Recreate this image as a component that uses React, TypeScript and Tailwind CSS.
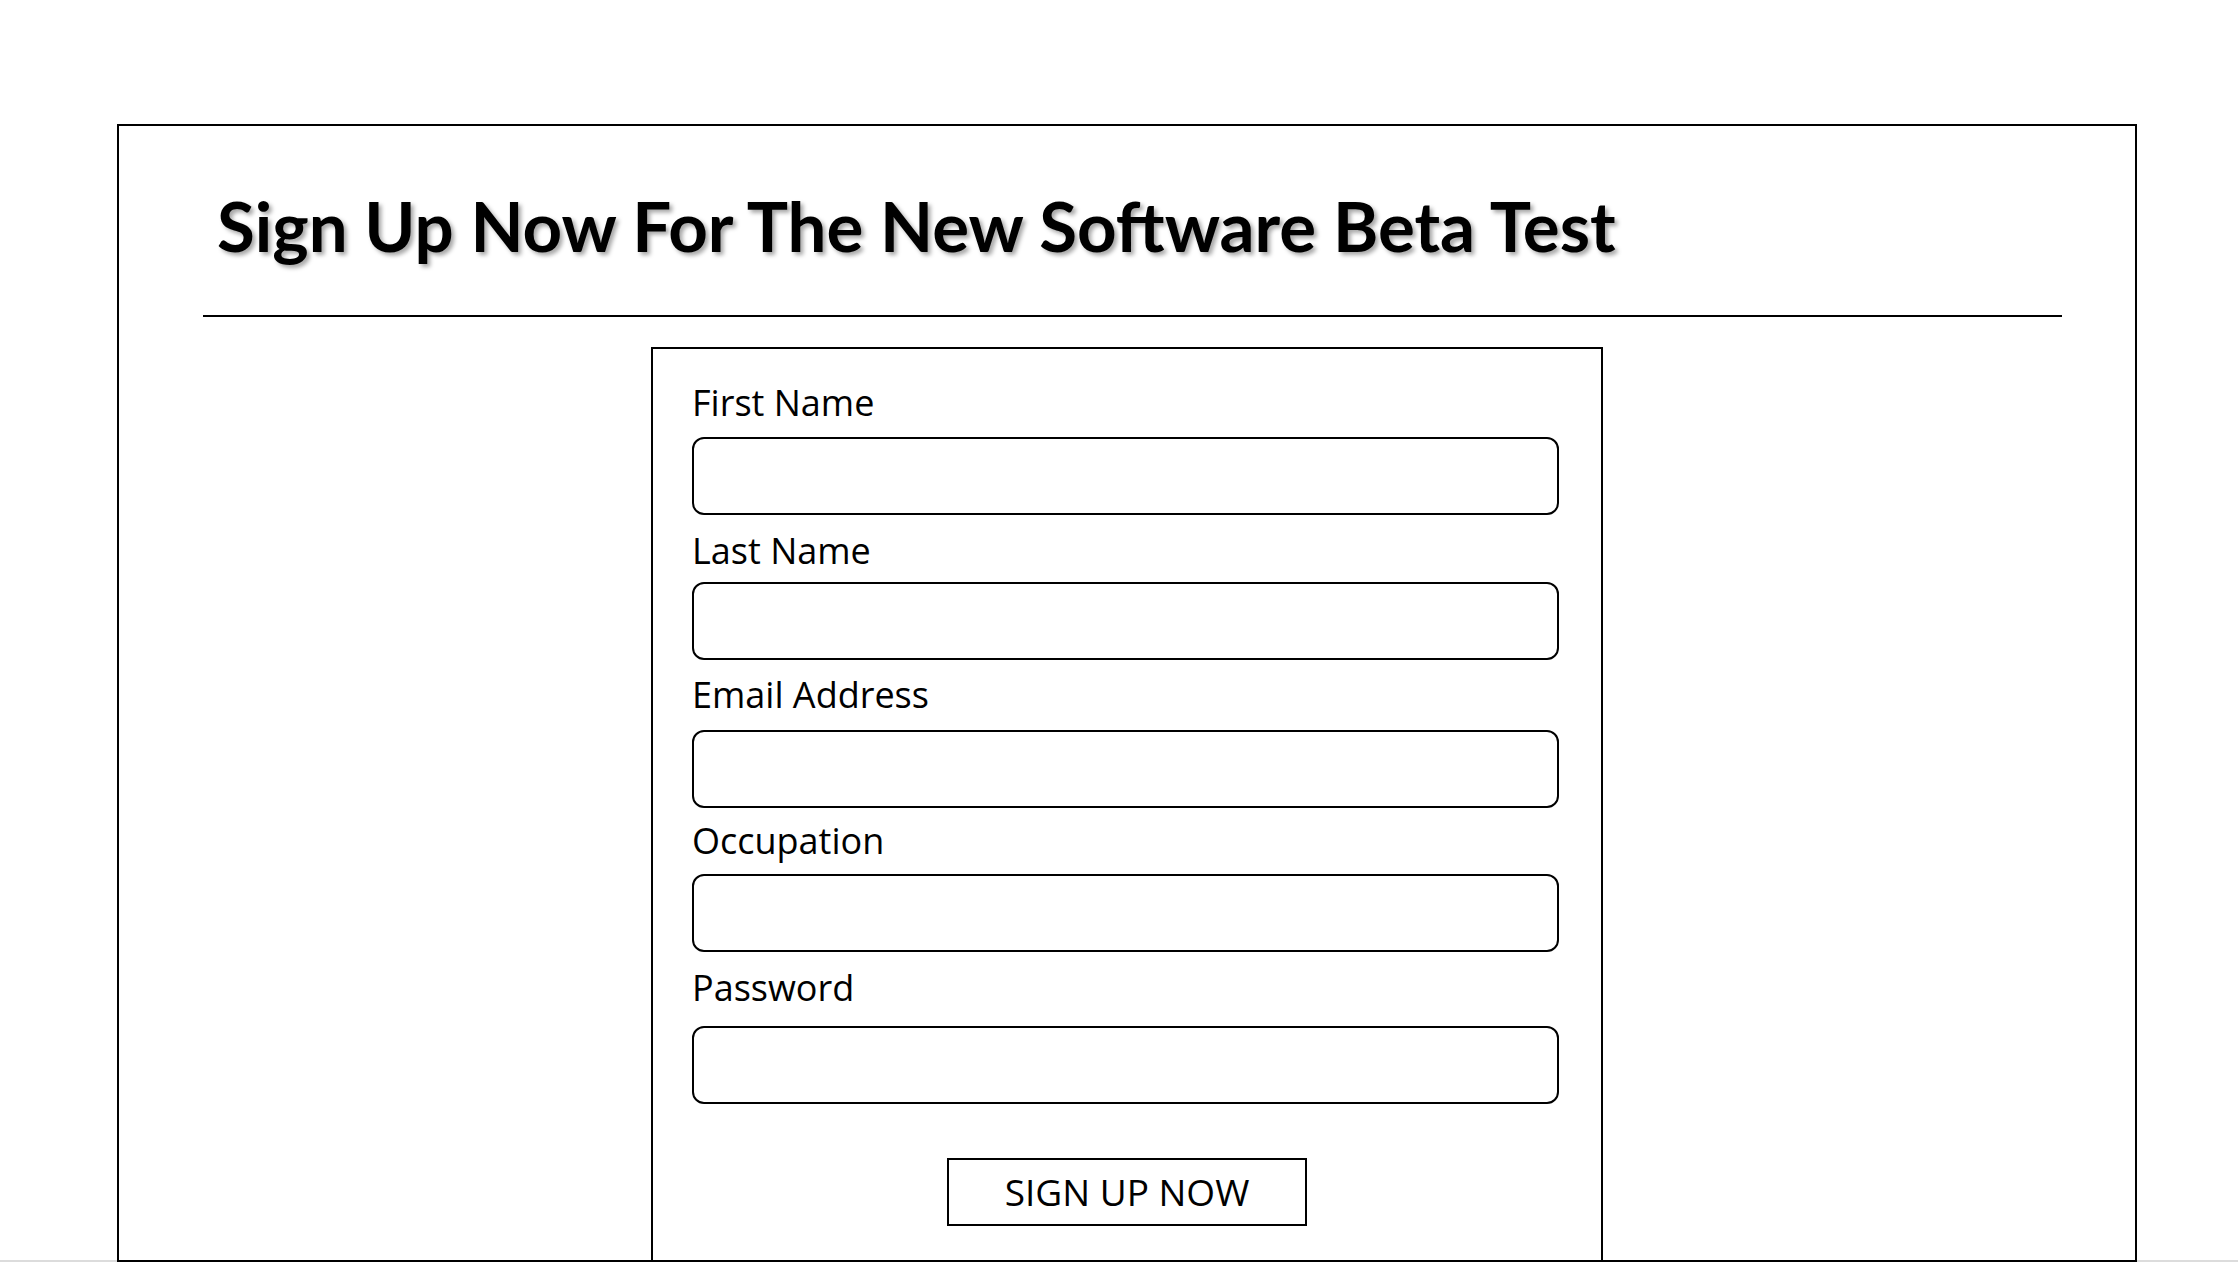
import React from "react";

const fields = [
  { label: "First Name", labelMt: "mt-[36px]", inputMt: "mt-[17px]" },
  { label: "Last Name", labelMt: "mt-[18px]", inputMt: "mt-[14px]" },
  { label: "Email Address", labelMt: "mt-[17px]", inputMt: "mt-[18px]" },
  { label: "Occupation", labelMt: "mt-[15px]", inputMt: "mt-[16px]" },
  { label: "Password", labelMt: "mt-[18px]", inputMt: "mt-[21px]" },
];

export default function App() {
  return (
    <div className="h-[1262px] w-full bg-white border-b-2 border-[#dcdcdc]">
      <div className="ml-[117px] pt-[124px] w-[2020px]">
        <div className="relative flex flex-col h-[1138px] border-2 border-black bg-white">
          <h1
            className="ml-[98px] mt-[65px] h-[69px] text-[69px] leading-[69px] font-bold text-black [text-shadow:3px_3px_4px_rgba(0,0,0,0.35)]"
            style={{ fontFamily: "Lato, 'Open Sans', sans-serif" }}
          >
            Sign Up Now For The New Software Beta Test
          </h1>
          <div className="ml-[84px] mt-[55px] w-[1859px] h-[2px] bg-black" />
          <div
            className="ml-[532px] mt-[30px] w-[952px] flex-1 border-2 border-b-0 border-black flex flex-col"
            style={{ fontFamily: "'Open Sans', sans-serif" }}
          >
            {fields.map((f) => (
              <React.Fragment key={f.label}>
                <label className={`${f.labelMt} ml-[39px] text-[36px] leading-[35px] font-medium text-black`}>
                  {f.label}
                </label>
                <div
                  className={`${f.inputMt} ml-[39px] w-[867px] h-[78px] rounded-[12px] border-2 border-black bg-white`}
                />
              </React.Fragment>
            ))}
            <button className="mt-[54px] ml-[294px] w-[360px] h-[68px] border-2 border-black bg-white flex items-center justify-center text-[37px] leading-[36px] font-medium text-black">
              SIGN UP NOW
            </button>
          </div>
        </div>
      </div>
    </div>
  );
}
